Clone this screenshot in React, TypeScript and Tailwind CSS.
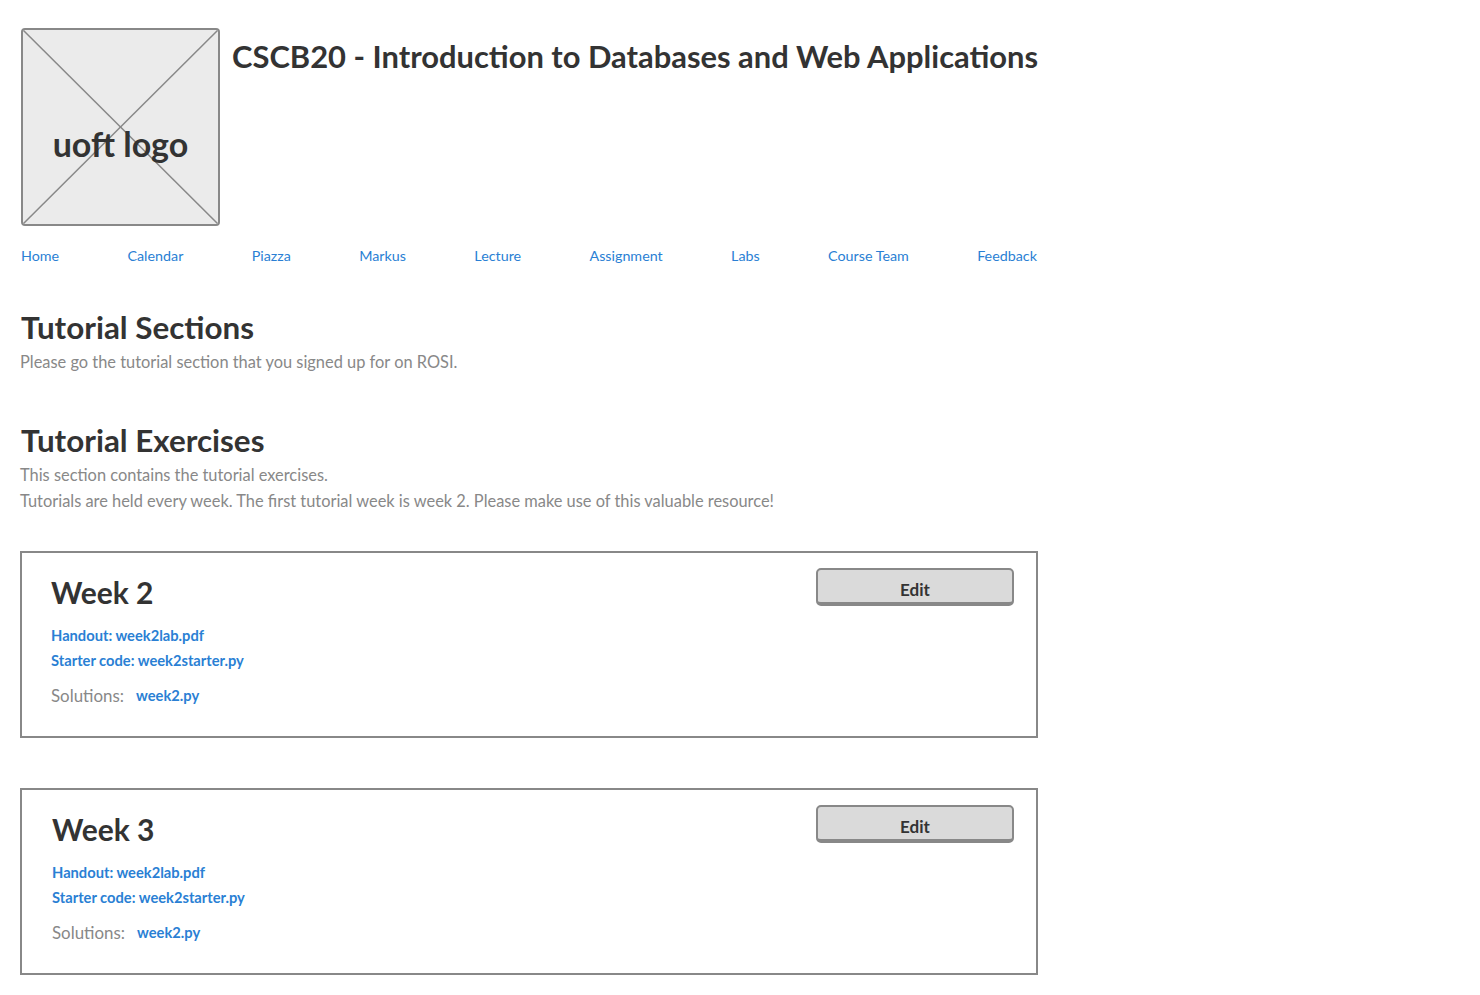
const navItems = [
  "Home",
  "Calendar",
  "Piazza",
  "Markus",
  "Lecture",
  "Assignment",
  "Labs",
  "Course Team",
  "Feedback",
];

const weeks = [
  { title: "Week 2", pad: "pl-[29px]" },
  { title: "Week 3", pad: "pl-[30px]" },
];

function LogoPlaceholder() {
  return (
    <div className="relative w-[199px] h-[198px] shrink-0 border-2 border-[#888888] rounded-[4px] bg-[#ebebeb] overflow-hidden">
      <svg
        className="absolute inset-0 w-full h-full"
        viewBox="0 0 100 100"
        preserveAspectRatio="none"
      >
        <line x1="0" y1="0" x2="100" y2="100" stroke="#888888" strokeWidth="1.5" vectorEffect="non-scaling-stroke" />
        <line x1="100" y1="0" x2="0" y2="100" stroke="#888888" strokeWidth="1.5" vectorEffect="non-scaling-stroke" />
      </svg>
      <span className="absolute left-0 right-0 top-[95px] text-center text-[34px] leading-[38px] font-bold text-[#333333]">
        uoft logo
      </span>
    </div>
  );
}

function WeekCard({ title, pad }: { title: string; pad: string }) {
  return (
    <div className={`flex justify-between border-2 border-[#888888] h-[187px] ${pad} pr-[22px] pt-[14px]`}>
      <div className="flex flex-col">
        <h3 className="text-[30px] leading-[50px] font-bold text-[#333333]">{title}</h3>
        <a className="mt-[6px] text-[14.7px] leading-[25px] font-bold text-[#2a7fd4]" href="#">
          Handout: week2lab.pdf
        </a>
        <a className="text-[14.7px] leading-[25px] font-bold text-[#2a7fd4]" href="#">
          Starter code: week2starter.py
        </a>
        <div className="mt-[10px] flex items-center gap-[12px]">
          <span className="text-[16.9px] leading-[25px] text-[#888888]">Solutions:</span>
          <a className="text-[14.7px] leading-[25px] font-bold text-[#2a7fd4]" href="#">
            week2.py
          </a>
        </div>
      </div>
      <button className="mt-[1px] w-[198px] h-[38px] bg-[#dadada] border-2 border-b-[4px] border-[#888888] rounded-[5px] text-[17px] leading-[20px] font-bold text-[#333333] pt-[7px]">
        Edit
      </button>
    </div>
  );
}

export default function App() {
  return (
    <div className="min-h-screen bg-white font-['Lato',sans-serif]">
      <div className="w-[1018px] ml-[20px] pt-[28px]">
        <div className="flex gap-[12px] pl-[1px]">
          <LogoPlaceholder />
          <h1 className="mt-[9px] text-[30.9px] leading-[40px] font-bold text-[#333333] whitespace-nowrap">
            CSCB20 - Introduction to Databases and Web Applications
          </h1>
        </div>

        <nav className="mt-[20px] flex justify-between pl-[1px] pr-[1px]">
          {navItems.map((item) => (
            <a key={item} href="#" className="text-[14.3px] leading-[20px] text-[#2a7fd4]">
              {item}
            </a>
          ))}
        </nav>

        <section className="mt-[39px]">
          <h2 className="pl-[1px] text-[31.4px] leading-[44px] font-bold text-[#333333]">Tutorial Sections</h2>
          <p className="text-[16.4px] leading-[26px] text-[#888888]">
            Please go the tutorial section that you signed up for on ROSI.
          </p>
        </section>

        <section className="mt-[43px]">
          <h2 className="pl-[1px] text-[31.4px] leading-[44px] font-bold text-[#333333]">Tutorial Exercises</h2>
          <p className="text-[16.4px] leading-[26px] text-[#888888]">
            This section contains the tutorial exercises.
          </p>
          <p className="text-[16.4px] leading-[26px] text-[#888888]">
            Tutorials are held every week. The first tutorial week is week 2. Please make use of this valuable resource!
          </p>
        </section>

        <div className="mt-[37px] flex flex-col gap-[50px]">
          {weeks.map((w) => (
            <WeekCard key={w.title} title={w.title} pad={w.pad} />
          ))}
        </div>
      </div>
    </div>
  );
}
